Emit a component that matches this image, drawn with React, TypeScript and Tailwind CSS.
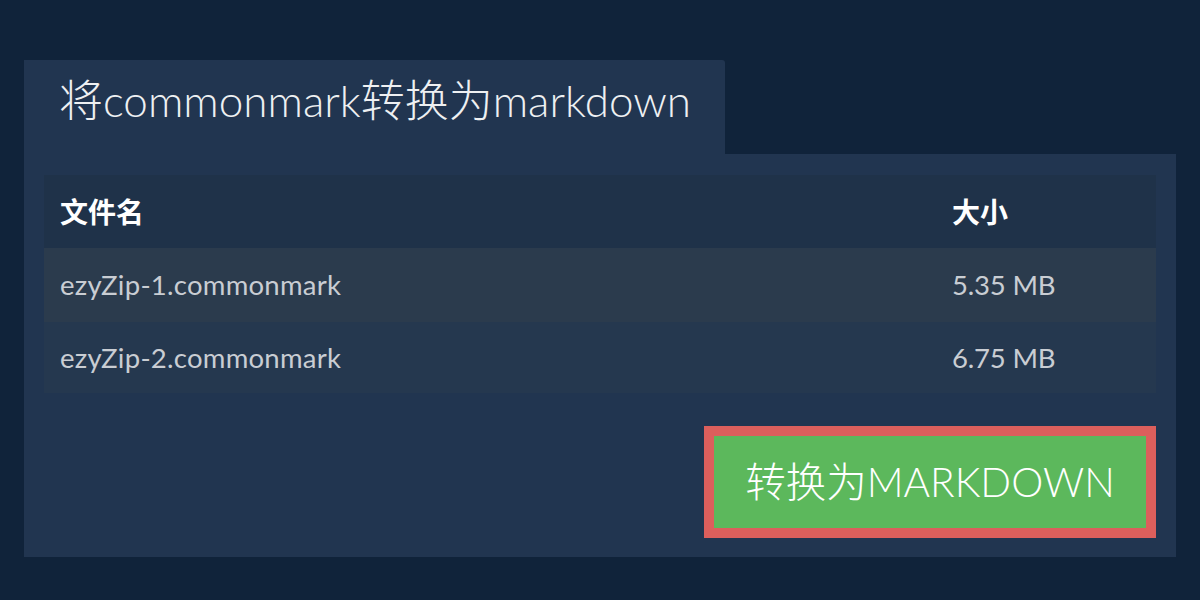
import React from "react";

const font = { fontFamily: "Lato, 'Noto Sans CJK SC', sans-serif" };

export default function App() {
  const rows = [
    { name: "ezyZip-1.commonmark", size: "5.35 MB", bg: "bg-[#2b3b4d]" },
    { name: "ezyZip-2.commonmark", size: "6.75 MB", bg: "bg-[#25384f]" },
  ];
  return (
    <div className="w-[1200px] h-[600px] bg-[#10233a] pt-[60px] px-[24px]" style={font}>
      <div className="flex">
        <div className="w-[701px] h-[94px] bg-[#213550] rounded-tr-[3px] pl-[35px] flex items-center">
          <h1 className="text-[44px] font-light text-[#eef0f2] leading-none pb-[14px]">将commonmark转换为markdown</h1>
        </div>
      </div>
      <div className="w-[1152px] h-[403px] bg-[#213550] pt-[21px] px-[20px]">
        <div className="w-[1112px]">
          <div className="flex h-[73px] items-center bg-[#1f3249] text-white font-bold text-[28px]">
            <div className="w-[892px] pl-[16px]">文件名</div>
            <div className="pl-[16px]">大小</div>
          </div>
          {rows.map((r, i) => (
            <div key={i} className={`flex items-center ${i === 0 ? "h-[74px]" : "h-[71px]"} ${r.bg} text-[#c9cdd3] text-[27.5px]`}>
              <div className="w-[892px] pl-[16px] tracking-[0.25px]">{r.name}</div>
              <div className="pl-[16px] tracking-[-0.2px]">{r.size}</div>
            </div>
          ))}
        </div>
        <div className="flex justify-end mt-[33px]">
          <button className="w-[452px] h-[112px] border-[10px] border-[#dc5f5c] bg-[#5cb85c] text-white text-[40.5px] font-light flex items-center justify-center leading-none">
            转换为MARKDOWN
          </button>
        </div>
      </div>
    </div>
  );
}
